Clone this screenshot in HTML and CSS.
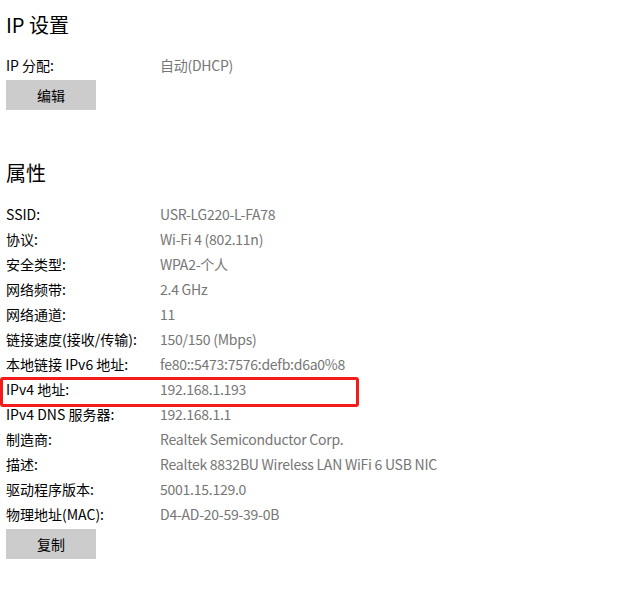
FILE: index.html
```html
<!DOCTYPE html>
<html>
<head>
    <title>网络属性</title>
    <link rel="stylesheet" href="styles.css">
</head>
<body>
    <h2>IP 设置</h2>
    <div class="row"><span class="label">IP 分配:</span><span class="value">自动(DHCP)</span></div>
    <button class="btn">编辑</button>

    <h2 class="props-title">属性</h2>
    <div class="row"><span class="label">SSID:</span><span class="value">USR-LG220-L-FA78</span></div>
    <div class="row"><span class="label">协议:</span><span class="value">Wi-Fi 4 (802.11n)</span></div>
    <div class="row"><span class="label">安全类型:</span><span class="value">WPA2-个人</span></div>
    <div class="row"><span class="label">网络频带:</span><span class="value">2.4 GHz</span></div>
    <div class="row"><span class="label">网络通道:</span><span class="value">11</span></div>
    <div class="row"><span class="label">链接速度(接收/传输):</span><span class="value">150/150 (Mbps)</span></div>
    <div class="row"><span class="label">本地链接 IPv6 地址:</span><span class="value">fe80::5473:7576:defb:d6a0%8</span></div>
    <div class="row highlight"><span class="label">IPv4 地址:</span><span class="value">192.168.1.193</span></div>
    <div class="row"><span class="label">IPv4 DNS 服务器:</span><span class="value">192.168.1.1</span></div>
    <div class="row"><span class="label">制造商:</span><span class="value">Realtek Semiconductor Corp.</span></div>
    <div class="row"><span class="label">描述:</span><span class="value">Realtek 8832BU Wireless LAN WiFi 6 USB NIC</span></div>
    <div class="row"><span class="label">驱动程序版本:</span><span class="value">5001.15.129.0</span></div>
    <div class="row"><span class="label">物理地址(MAC):</span><span class="value">D4-AD-20-59-39-0B</span></div>
    <button class="btn">复制</button>
</body>
</html>
```

FILE: styles.css
```css
body {
    margin: 0;
    padding: 10px 6px 0;
    background-color: #fff;
    font-family: "Noto Sans CJK SC", "Noto Sans", sans-serif;
    font-size: 14px;
    color: #000;
}
h2 {
    margin: 0 0 13px;
    font-size: 20px;
    font-weight: normal;
    line-height: 30px;
}
.props-title {
    margin-top: 48px;
    margin-bottom: 14px;
}
.row {
    display: grid;
    grid-template-columns: 154px 1fr;
    height: 25px;
    line-height: 25px;
}
.value {
    color: #767676;
    letter-spacing: -0.25px;
}
.highlight {
    position: relative;
}
.highlight::after {
    content: "";
    position: absolute;
    left: -6px;
    top: 0;
    width: 353px;
    height: 24px;
    border: 3px solid #f21c1c;
    border-radius: 3px;
}
.btn {
    display: block;
    width: 90px;
    height: 30px;
    margin-top: 2px;
    border: none;
    background-color: #ccc;
    font-family: inherit;
    font-size: 14px;
    color: #000;
}
```
